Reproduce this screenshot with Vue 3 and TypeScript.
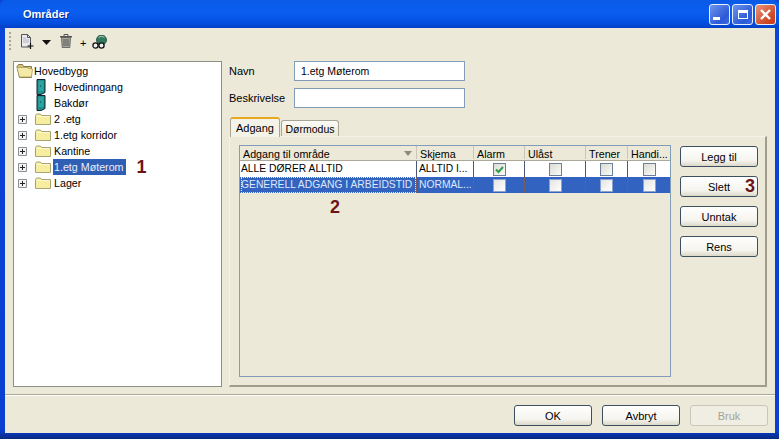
<template>
  <div class="window">
    <header class="titlebar">
      <span class="title">Områder</span>
      <div class="controls">
        <span class="ctl"><i class="min"></i></span>
        <span class="ctl"><i class="max"></i></span>
        <span class="ctl close">
          <svg width="13" height="13" viewBox="0 0 13 13"><path d="M2 2l9 9M11 2l-9 9" stroke="#fff" stroke-width="2.4" /></svg>
        </span>
      </div>
    </header>

    <div class="body">
      <div class="toolbar">
        <span class="grip"></span>
        <svg class="tool new" width="14" height="15" viewBox="0 0 14 15">
          <path d="M1.500.5h6l3 3v9.500h-9z" fill="#e9e9ee" stroke="#555" />
          <path d="M7.500.5v3h3" fill="none" stroke="#555" />
          <path d="M3 4h3M3 6h6M3 8h6" stroke="#b5b5c5" />
          <path d="M10.500 9v6M7.500 12h6" stroke="#111" stroke-width="1.200" />
        </svg>
        <svg class="arrow" width="9" height="5" viewBox="0 0 9 5"><path d="M0 0h9L4.500 5z" fill="#111" /></svg>
        <svg class="tool trash" width="12" height="14" viewBox="0 0 12 14">
          <path d="M0 2h12v1.500H0z" fill="#555" />
          <path d="M4 2V.5h4V2" fill="none" stroke="#555" />
          <path d="M1.500 3.500h9l-.7 10H2.200z" fill="#a5a59c" stroke="#555" stroke-width=".8" />
          <path d="M4 5v7M6 5v7M8 5v7" stroke="#555" stroke-width=".9" />
        </svg>
        <span class="plus">+</span>
        <svg class="tool" width="15" height="14" viewBox="0 0 15 14">
          <circle cx="9.500" cy="5" r="5" fill="#2f7a5d" stroke="#244" stroke-width=".8" />
          <path d="M6.500 2.500c2-1.500 4-1.500 6 0" stroke="#9fd0b5" fill="none" />
          <circle cx="3.500" cy="10.500" r="2.600" fill="#eee" stroke="#111" stroke-width="1.300" />
          <circle cx="9.500" cy="10.500" r="2.600" fill="#eee" stroke="#111" stroke-width="1.300" />
        </svg>
      </div>

      <div class="main">
        <div class="tree">
          <div class="node root">
            <svg class="folder open" width="17" height="14" viewBox="0 0 17 14">
              <path d="M1 2.500l1.500-2h4l1 2h8v11H3.500z" fill="#d9c578" stroke="#85794a" />
              <path d="M1 3.500h10l2 1 3.500.5-1 8H3.500z" fill="#f4e9a6" stroke="#a89a60" stroke-width=".8" />
            </svg>
            <span class="label">Hovedbygg</span>
          </div>
          <div v-for="door in doors" :key="door" class="node door">
            <svg width="10" height="16" viewBox="0 0 10 16">
              <path d="M1 .5h8v13L5 15.500H1z" fill="#1f8f8c" stroke="#123" />
              <path d="M2.500 2h5v10h-5z" fill="#2aa5a0" />
              <path d="M4 7h1" stroke="#033" />
            </svg>
            <span class="label">{{ door }}</span>
          </div>
          <div v-for="item in items" :key="item" class="node branch">
            <span class="expander">
              <svg width="9" height="9" viewBox="0 0 9 9">
                <path d="M.5.500h8v8h-8z" fill="#f3f3ec" stroke="#8a8f9c" />
                <path d="M2 4.500h5M4.500 2v5" stroke="#222" />
              </svg>
            </span>
            <svg class="folder" width="16" height="14" viewBox="0 0 16 14">
              <path d="M.5 3.500l1-1.500h4l1 1.500h9v9H.5z" fill="#f6ee9e" stroke="#a8a373" />
              <path d="M1.500 4.500h13" stroke="#fdf9d6" />
            </svg>
            <span class="label" :class="{ sel: item === selectedItem }">{{ item }}</span>
            <span v-if="item === selectedItem" class="mark tree-mark">1</span>
          </div>
        </div>

        <div class="right">
          <div class="field">
            <label>Navn</label>
            <div class="input">1.etg Møterom</div>
          </div>
          <div class="field second">
            <label>Beskrivelse</label>
            <div class="input"></div>
          </div>

          <div class="tabs">
            <span class="tab active">Adgang</span>
            <span class="tab">Dørmodus</span>
          </div>
          <div class="panel">
            <div class="table">
              <div class="thead">
                <div class="th c-name">Adgang til område<i class="sort"></i></div>
                <div class="th c-plan">Skjema</div>
                <div class="th c-alarm">Alarm</div>
                <div class="th c-open">Ulåst</div>
                <div class="th c-tr">Trener</div>
                <div class="th c-hand">Handi...</div>
              </div>
              <div v-for="row in rows" :key="row.name" class="tr" :class="{ picked: row.picked }">
                <div class="td c-name"><span :class="{ focus: row.picked }">{{ row.name }}</span></div>
                <div class="td c-plan">{{ row.plan }}</div>
                <div v-for="col in checkCols" :key="col.cls" class="td check" :class="col.cls">
                  <span class="box">
                    <svg v-if="row.alarm && col.cls === 'c-alarm'" width="11" height="11" viewBox="0 0 11 11">
                      <path d="M2 5.500l2.500 2.500L9 3" fill="none" stroke="#2f9e4a" stroke-width="2" />
                    </svg>
                  </span>
                </div>
              </div>
              <span class="mark table-mark">2</span>
            </div>
            <div class="side">
              <button class="btn">Legg til</button>
              <button class="btn">Slett<span class="mark btn-mark">3</span></button>
              <button class="btn">Unntak</button>
              <button class="btn">Rens</button>
            </div>
          </div>
        </div>
      </div>

      <div class="footer">
        <button class="btn">OK</button>
        <button class="btn">Avbryt</button>
        <button class="btn off" disabled>Bruk</button>
      </div>
    </div>
  </div>
</template>

<script setup lang="ts">
const doors: string[] = ['Hovedinngang', 'Bakdør']
const items: string[] = ['2 .etg', '1.etg korridor', 'Kantine', '1.etg Møterom', 'Lager']
const selectedItem = '1.etg Møterom'

interface Row {
  name: string
  plan: string
  alarm: boolean
  picked: boolean
}

const rows: Row[] = [
  { name: 'ALLE DØRER ALLTID', plan: 'ALLTID I...', alarm: true, picked: false },
  { name: 'GENERELL ADGANG I ARBEIDSTID', plan: 'NORMAL...', alarm: false, picked: true },
]

const checkCols = [{ cls: 'c-alarm' }, { cls: 'c-open' }, { cls: 'c-tr' }, { cls: 'c-hand' }]
</script>

<style>
html,
body {
  margin: 0;
  background: #ece9d8;
}
</style>

<style scoped>
.window {
  width: 779px;
  height: 439px;
  box-sizing: border-box;
  display: flex;
  flex-direction: column;
  overflow: hidden;
  background: linear-gradient(180deg, #0a46d8 0%, #0a3fd0 98%, #082a80 100%);
  font-family: 'Liberation Sans', Arial, sans-serif;
  font-size: 11px;
  color: #000;
}

.titlebar {
  height: 28px;
  flex: none;
  display: flex;
  align-items: center;
  justify-content: space-between;
  padding: 0 3px 0 23px;
  background: linear-gradient(180deg, #0a5ae6 0%, #0a5ef0 45%, #0350e0 80%, #0340c8 100%);
  border-radius: 6px 6px 0 0;
}

.title {
  color: #fff;
  font-weight: 700;
  font-size: 11px;
  text-shadow: 1px 1px 0 #0a2a90;
}

.controls {
  display: flex;
  gap: 2px;
}

.ctl {
  width: 19px;
  height: 19px;
  border: 1px solid #e8f0ff;
  border-radius: 3px;
  background: linear-gradient(135deg, #6f94ea, #2c59d8 70%, #3d6ae0);
  display: flex;
  align-items: center;
  justify-content: center;
}

.ctl.close {
  background: linear-gradient(135deg, #e9967a, #cf4a26 70%, #c63a1a);
}

.min {
  width: 7px;
  height: 3px;
  background: #fff;
  margin: 9px 6px 0 0;
}

.max {
  width: 10px;
  height: 9px;
  border: 1px solid #fff;
  border-top-width: 3px;
  box-sizing: border-box;
}

.body {
  flex: 1;
  margin: 0 4px 6px 5px;
  background: #ece9d8;
  display: flex;
  flex-direction: column;
  min-height: 0;
}

.toolbar {
  height: 27px;
  flex: none;
  display: flex;
  align-items: center;
  padding-left: 4px;
  box-sizing: border-box;
}

.grip {
  width: 2px;
  height: 19px;
  background: repeating-linear-gradient(180deg, #a8a596 0 2px, transparent 2px 4px);
  margin-right: 9px;
}

.new {
  margin-top: -1px;
}

.arrow {
  margin: 1px 0 0 8px;
}

.trash {
  margin: -2px 0 0 9px;
}

.plus {
  font-size: 11px;
  margin: 3px 6px 0 8px;
}

.main {
  display: flex;
  margin-left: 8px;
  margin-top: 6px;
}

.tree {
  width: 209px;
  height: 326px;
  box-sizing: border-box;
  flex: none;
  background: #fff;
  border: 1px solid #8d8f85;
  padding-top: 1px;
}

.node {
  height: 16px;
  display: flex;
  align-items: center;
  white-space: nowrap;
}

.root {
  padding-left: 2px;
}

.door {
  padding-left: 22px;
}

.door .label {
  margin-left: 7px;
}

.branch .expander {
  width: 9px;
  height: 9px;
  display: flex;
  margin: 0 8px 0 4px;
}

.branch .folder {
  flex: none;
  margin-right: 2px;
}

.label {
  line-height: 16px;
  padding: 0 2px 0 1px;
  font-size: 10.7px;
}

.sel {
  background: #2f5fb5;
  color: #e9eefc;
}

.mark {
  color: #6e1414;
  font-weight: 700;
  font-size: 18px;
  line-height: 17px;
}

.tree-mark {
  margin-left: 11px;
}

.right {
  flex: 1;
  margin-left: 7px;
  min-width: 0;
}

.field {
  display: flex;
  align-items: center;
  height: 20px;
}

.field.second {
  margin-top: 7px;
}

.field label {
  width: 65px;
  flex: none;
}

.input {
  width: 171px;
  height: 20px;
  box-sizing: border-box;
  border: 1px solid #7f9db9;
  background: #fff;
  padding-left: 6px;
  line-height: 18px;
  font-size: 10.5px;
}

.tabs {
  display: flex;
  align-items: flex-end;
  height: 20px;
  margin-top: 8px;
  padding-left: 1px;
}

.tab {
  width: 58px;
  height: 16px;
  box-sizing: border-box;
  border: 1px solid #a8a596;
  border-bottom: none;
  border-radius: 3px 3px 0 0;
  background: linear-gradient(180deg, #fbfbf7, #ece9d8);
  text-align: center;
  line-height: 17px;
  font-size: 10.5px;
  margin-left: 1px;
}

.tab.active {
  width: 50px;
  height: 20px;
  margin-left: 0;
  border-top: 2px solid #e8a820;
  background: #f4f3ea;
  line-height: 18px;
  font-size: 11px;
  position: relative;
  z-index: 1;
  margin-bottom: -1px;
}

.panel {
  width: 538px;
  height: 251px;
  box-sizing: border-box;
  background: #ece9d8;
  border: 1px solid #f4f3ea;
  border-right: 2px solid #a09d8c;
  border-bottom: 2px solid #a09d8c;
  display: flex;
  padding: 8px 0 0 9px;
}

.table {
  width: 432px;
  height: 232px;
  box-sizing: border-box;
  flex: none;
  border: 1px solid #7f9db9;
  position: relative;
}

.thead {
  display: flex;
  height: 14px;
  background: #ece9d8;
  border-bottom: 1px solid #aca899;
}

.th {
  height: 13px;
  line-height: 16px;
  box-sizing: border-box;
  padding-left: 3px;
  border-right: 1px solid #c9c6b5;
  white-space: nowrap;
  position: relative;
  font-size: 10.7px;
}

.sort {
  position: absolute;
  right: 4px;
  top: 5px;
  border-left: 4px solid transparent;
  border-right: 4px solid transparent;
  border-top: 5px solid #8c8a80;
}

.c-name {
  width: 177px;
  flex: none;
}

.c-plan {
  width: 57px;
  flex: none;
}

.c-alarm {
  width: 51px;
  flex: none;
}

.c-open {
  width: 61px;
  flex: none;
}

.c-tr {
  width: 42px;
  flex: none;
}

.c-hand {
  width: 42px;
  flex: none;
  border-right: none;
}

.tr {
  display: flex;
  height: 16px;
  background: #fff;
}

.tr.picked {
  background: #3263c0;
  color: #dfe8fa;
}

.td {
  height: 16px;
  box-sizing: border-box;
  line-height: 16px;
  padding-left: 1px;
  border-right: 1px solid #4a5a78;
  white-space: nowrap;
  overflow: hidden;
  font-size: 10.3px;
}

.td.c-plan {
  padding-left: 2px;
}

.tr.picked .td {
  border-right-color: #7d5a5a;
}

.td.c-hand {
  border-right: none;
}

.focus {
  display: block;
  outline: 1px dotted #e8eefc;
  outline-offset: -1px;
}

.check {
  display: flex;
  align-items: center;
  justify-content: center;
  padding-left: 0;
}

.box {
  width: 13px;
  height: 13px;
  box-sizing: border-box;
  border: 1px solid #6d7f98;
  background: linear-gradient(135deg, #dcdcd4, #fbfbf9);
  display: flex;
  align-items: center;
  justify-content: center;
}

.tr.picked .box {
  border-color: #8aa2d0;
  background: linear-gradient(135deg, #e4e4e2, #ffffff);
}

.table-mark {
  position: absolute;
  left: 90px;
  top: 53px;
}

.side {
  margin: 1px 0 0 9px;
  display: flex;
  flex-direction: column;
  gap: 9px;
}

.btn {
  width: 78px;
  height: 21px;
  padding: 0;
  box-sizing: border-box;
  border: 1px solid #3c5060;
  border-radius: 3px;
  background: linear-gradient(180deg, #ffffff 0%, #f5f4ee 70%, #dcd8c8 100%);
  font-family: 'Liberation Sans', Arial, sans-serif;
  font-size: 11px;
  color: #000;
  position: relative;
}

.btn-mark {
  position: absolute;
  right: 2px;
  top: 1px;
}

.footer {
  flex: 1;
  margin-top: 7px;
  border-top: 1px solid #aca899;
  box-shadow: inset 0 1px 0 #fdfdf9;
  display: flex;
  justify-content: flex-end;
  gap: 10px;
  padding: 10px 7px 0 0;
  box-sizing: border-box;
}

.off {
  border-color: #c9c7ba;
  background: #f0eee2;
  color: #a5a394;
}
</style>
